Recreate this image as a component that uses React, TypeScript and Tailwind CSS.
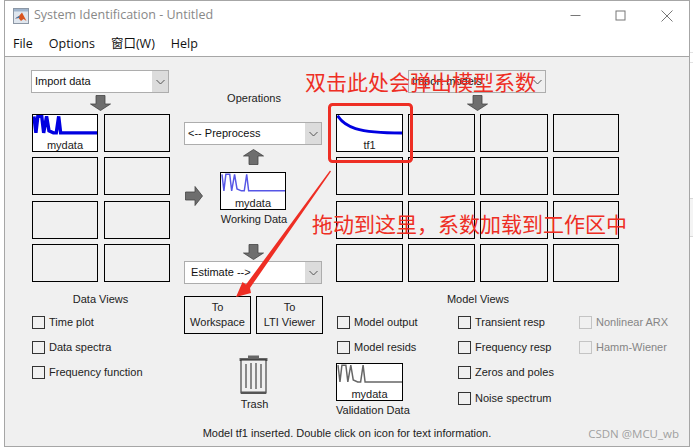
const sans = "font-['Liberation_Sans',sans-serif]";

const wave = "1,1 3,18 5,1 9,1 11,18 14,1 16.5,16 21,18 24,18 26.5,1 28.5,18 66,18";

function Tile({ label, children }: { label?: string; children?: React.ReactNode }) {
  return (
    <div className={`relative h-[38px] w-full border border-black ${label ? "bg-white" : "bg-[#f0f0f0]"}`}>
      {children}
      {label && <div className="absolute inset-x-0 bottom-0 text-center text-[11px] leading-[12px] text-[#222]">{label}</div>}
    </div>
  );
}

function Wave({ color, width }: { color: string; width: number }) {
  return (
    <svg viewBox="0 0 66 25" className="absolute left-0 top-0 h-[25px] w-full">
      <polyline points={wave} fill="none" stroke={color} strokeWidth={width} />
    </svg>
  );
}

function Drop({ text, disabled }: { text: string; disabled?: boolean }) {
  return (
    <div className={`flex h-[23px] w-[138px] items-stretch border border-[#adadad] ${disabled ? "bg-[#efefef]" : "bg-white"}`}>
      <div className="flex-1 pl-[3px] text-[11px] leading-[21px] text-[#111]">{text}</div>
      <div className={`flex w-[16px] items-center justify-center ${disabled ? "" : "bg-[#dcdcdc]"}`}>
        <svg width="9" height="6" viewBox="0 0 9 6"><path d="M0.5 1 L4.5 5 L8.5 1" fill="none" stroke="#555" /></svg>
      </div>
    </div>
  );
}

function ArrowDown({ className }: { className?: string }) {
  return (
    <svg width="21" height="16" viewBox="0 0 21 16" className={className}>
      <polygon points="6,0.5 15,0.5 15,9 20.5,9 10.5,15.5 0.5,9 6,9" fill="#6e6e6e" stroke="#444" strokeWidth="0.8" />
    </svg>
  );
}

function ArrowRight() {
  return (
    <svg width="18" height="20" viewBox="0 0 18 20">
      <polygon points="0.5,6 10,6 10,0.5 17.5,10 10,19.5 10,14 0.5,14" fill="#6e6e6e" stroke="#444" strokeWidth="0.8" />
    </svg>
  );
}

function Check({ label, disabled }: { label: string; disabled?: boolean }) {
  return (
    <div className="flex h-[13px] items-center gap-[4px] whitespace-nowrap">
      <div className={`h-[13px] w-[13px] border ${disabled ? "border-[#c4c4c4]" : "border-[#333]"}`} />
      <span className={`text-[11px] ${disabled ? "text-[#858585]" : "text-[#222]"}`}>{label}</span>
    </div>
  );
}

function MatlabIcon() {
  return (
    <svg width="16" height="16" viewBox="0 0 16 16">
      <rect x="0.5" y="0.5" width="15" height="15" fill="#dfe6ee" stroke="#8c97a5" />
      <rect x="1" y="1" width="14" height="2.5" fill="#9fb4cc" />
      <polygon points="2,10.5 6,8 9,4.5 13.5,13 10.5,11 8,13 5.5,10" fill="#d9541e" />
      <polygon points="2,10.5 6,8 7,9 5.5,10" fill="#3c7fb8" />
    </svg>
  );
}

export default function App() {
  return (
    <div className={`relative h-[448px] w-[693px] overflow-hidden bg-white ${sans}`}>
      <div className="ml-[4px] flex h-[447px] w-[686px] flex-col border border-[#a6a6a6] bg-white">
        <div className="flex h-[29px] shrink-0 items-center pl-[8px]">
          <MatlabIcon />
          <span className="ml-[5px] flex-1 font-['Open_Sans',sans-serif] text-[12.5px] text-[#888]">System Identification - Untitled</span>
          <div className="flex h-full w-[45px] items-center justify-center pr-[2px]">
            <svg width="11" height="11" viewBox="0 0 11 11"><path d="M0.5 5.5H10.5" stroke="#777" /></svg>
          </div>
          <div className="flex h-full w-[45px] items-center justify-center pr-[2px]">
            <svg width="11" height="11" viewBox="0 0 11 11"><rect x="1" y="1" width="9" height="9" fill="none" stroke="#777" /></svg>
          </div>
          <div className="flex h-full w-[45px] items-center justify-center pl-[1px]">
            <svg width="12" height="12" viewBox="0 0 12 12"><path d="M0.5 0.5L11.5 11.5M11.5 0.5L0.5 11.5" stroke="#777" /></svg>
          </div>
        </div>
        <div className="flex h-[27px] shrink-0 items-start gap-[16px] border-b border-[#a6a6a6] pl-[8px] pt-[6px] font-['Open_Sans','Noto_Sans_CJK_SC',sans-serif] text-[12.5px] leading-[16px] text-[#111]">
          <span>File</span>
          <span>Options</span>
          <span>窗口(W)</span>
          <span>Help</span>
        </div>

        <div className="relative flex flex-1 flex-col bg-[#f0f0f0]">
          <div className="flex flex-1 pl-[26px] pt-[13px]">
            {/* data side */}
            <div className="flex w-[139px] shrink-0 flex-col">
              <Drop text="Import data" />
              <ArrowDown className="ml-[59px] mt-[2px]" />
              <div className="ml-[1px] mt-[3px] grid grid-cols-[66px_66px] gap-x-[6px] gap-y-[5.33px]">
                <Tile label="mydata"><Wave color="#0000e0" width={3.5} /></Tile>
                {Array.from({ length: 7 }).map((_, i) => <Tile key={i} />)}
              </div>
              <div className="mt-[11px] text-center text-[11px] leading-[13px] text-[#222]">Data Views</div>
              <div className="ml-[1px] mt-[10px] flex flex-col gap-[12px]">
                <Check label="Time plot" />
                <Check label="Data spectra" />
                <Check label="Frequency function" />
              </div>
            </div>

            {/* operations */}
            <div className="ml-[14px] flex w-[140px] shrink-0 flex-col">
              <div className="mt-[22px] text-center text-[11px] leading-[13px] text-[#222]">Operations</div>
              <div className="mt-[17px]"><Drop text="<-- Preprocess" /></div>
              <ArrowDown className="ml-[59px] mt-[4px] rotate-180" />
              <div className="mt-[7px] flex items-start">
                <div className="mt-[14px] ml-[1px]"><ArrowRight /></div>
                <div className="ml-[17px] w-[66px]">
                  <Tile label="mydata"><Wave color="#5656e6" width={1.5} /></Tile>
                </div>
              </div>
              <div className="mt-[3px] text-center text-[11px] leading-[13px] text-[#222]">Working Data</div>
              <ArrowDown className="ml-[59px] mt-[18px]" />
              <div className="mt-[1px]"><Drop text={"\u00a0Estimate -->"} /></div>
              <div className="mt-[12px] flex gap-[5px]">
                <div className="flex h-[38px] w-[67px] flex-col items-center justify-center border border-black text-[11px] leading-[15px] text-[#222]"><span>To</span><span>Workspace</span></div>
                <div className="flex h-[38px] w-[67px] flex-col items-center justify-center border border-black text-[11px] leading-[15px] text-[#222]"><span>To</span><span>LTI Viewer</span></div>
              </div>
              <svg width="29" height="40" viewBox="0 0 29 40" className="ml-[55px] mt-[21px]">
                <rect x="9" y="0.5" width="11" height="3" fill="#666" />
                <rect x="0.5" y="3" width="28" height="3" fill="#666" />
                <rect x="2" y="5" width="25" height="33" fill="#f0f0f0" stroke="#222" />
                <rect x="2" y="36.5" width="25" height="2.5" fill="#555" />
                <path d="M7 9V33M12 8V34M17 8V34M22 9V33" stroke="#222" strokeWidth="1" fill="none" />
              </svg>
              <div className="mt-[3px] pl-[1px] text-center text-[11px] leading-[13px] text-[#222]">Trash</div>
            </div>

            {/* model side */}
            <div className="ml-[12px] flex w-[340px] shrink-0 flex-col">
              <div className="ml-[72px]"><Drop text="Import models" disabled /></div>
              <ArrowDown className="ml-[131px] mt-[2px]" />
              <div className="mt-[3px] grid w-[284px] grid-cols-[67px_67px_68px_66px] gap-x-[5px] gap-y-[5.33px]">
                <Tile label="tf1">
                  <svg viewBox="0 0 66 25" className="absolute left-0 top-0 h-[25px] w-full">
                    <path d="M0.5 0.5C8 12 20 18 66 18" fill="none" stroke="#0000e0" strokeWidth="3" />
                  </svg>
                </Tile>
                {Array.from({ length: 15 }).map((_, i) => <Tile key={i} />)}
              </div>
              <div className="mt-[11px] w-[284px] text-center text-[11px] leading-[13px] text-[#222]">Model Views</div>
              <div className="mt-[10px] flex">
                <div className="ml-[1px] flex w-[121px] shrink-0 flex-col">
                  <Check label="Model output" />
                  <div className="mt-[12px]"><Check label="Model resids" /></div>
                  <div className="-ml-[1px] mt-[9px] w-[67px]">
                    <Tile label="mydata"><Wave color="#666" width={1.5} /></Tile>
                  </div>
                  <div className="-ml-[1px] mt-[3px] w-[67px] whitespace-nowrap text-center text-[11px] leading-[13px] text-[#222]">Validation Data</div>
                </div>
                <div className="flex w-[121px] shrink-0 flex-col">
                  <Check label="Transient resp" />
                  <div className="mt-[12px]"><Check label="Frequency resp" /></div>
                  <div className="mt-[12px]"><Check label="Zeros and poles" /></div>
                  <div className="mt-[13px]"><Check label="Noise spectrum" /></div>
                </div>
                <div className="flex flex-col">
                  <Check label="Nonlinear ARX" disabled />
                  <div className="mt-[12px]"><Check label="Hamm-Wiener" disabled /></div>
                </div>
              </div>
            </div>
          </div>

          <div className="relative h-[23px] text-center text-[11px] leading-[21px] text-[#222]">
            Model tf1 inserted. Double click on icon for text information.
            <span className="absolute right-[10px] top-0 font-['Open_Sans',sans-serif] text-[11.5px] text-[#a0a0a0]">CSDN @MCU_wb</span>
          </div>
        </div>
      </div>

      {/* red annotations pasted on the screenshot */}
      <svg width="693" height="448" viewBox="0 0 693 448" className="pointer-events-none absolute left-0 top-0">
        <rect x="329.5" y="104.5" width="82" height="57" rx="3" fill="none" stroke="#ee2e24" strokeWidth="3" />
        <polygon points="330,170.5 331,171.5 250,288 251,293 236,297 242.5,282 246,284.5" fill="#ee2e24" />
      </svg>
      <div className="absolute left-[305px] top-[68px] whitespace-nowrap font-['Noto_Sans_CJK_SC',sans-serif] text-[21px] leading-[26px] text-[#ee2e24]">双击此处会弹出模型系数</div>
      <div className="absolute left-[312px] top-[210px] whitespace-nowrap font-['Noto_Sans_CJK_SC',sans-serif] text-[21px] leading-[26px] text-[#ee2e24]">拖动到这里，系数加载到工作区中</div>

      {/* bits of the desktop behind the window */}
      <div className="absolute left-[690px] top-[52px] h-px w-[3px] bg-[#e2e2e2]" />
      <div className="absolute left-[690px] top-[62px] h-px w-[3px] bg-[#e2e2e2]" />
      <div className="absolute left-[690px] top-[198px] h-[39px] w-[3px] border-y border-[#d8d8d8] bg-[#f4f4f4]" />
    </div>
  );
}
